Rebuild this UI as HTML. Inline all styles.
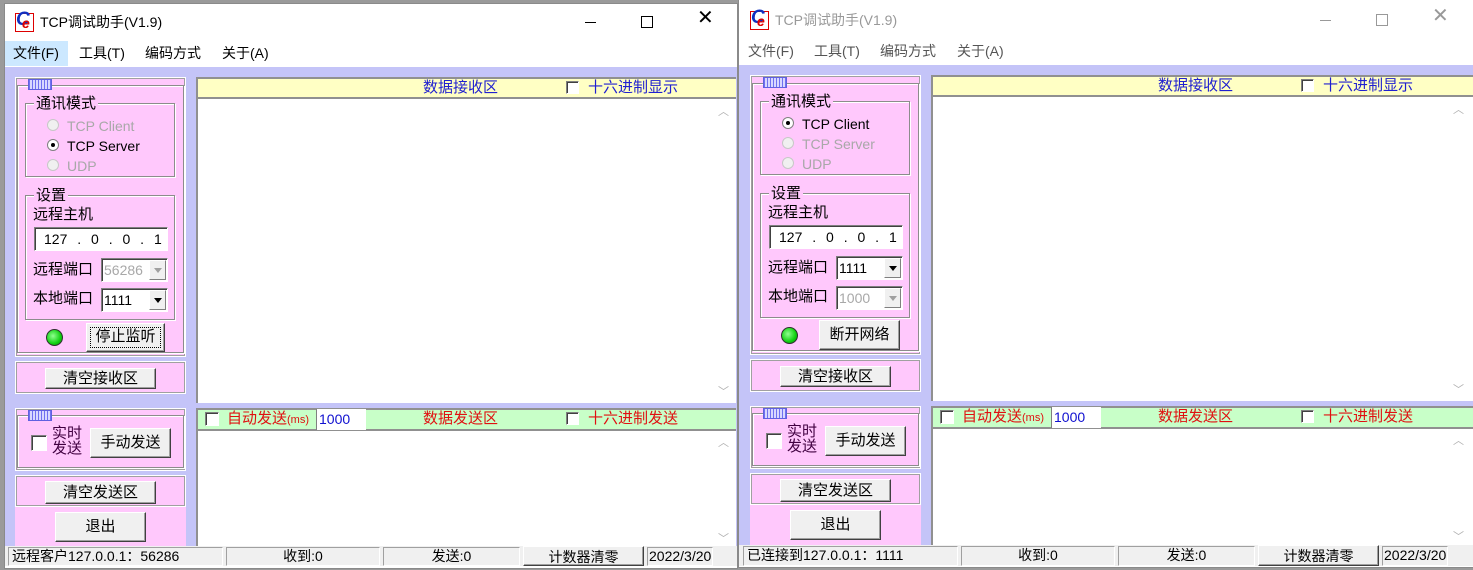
<!DOCTYPE html>
<html><head><meta charset="utf-8">
<style>
*{box-sizing:border-box;margin:0;padding:0}
body{width:1473px;height:566px;position:relative;overflow:hidden;background:#9a9a9a;font-family:"Liberation Sans","Noto Sans CJK SC",sans-serif;color:#000}
.win{position:absolute;left:0;top:0;width:740px;height:570px}
.a{position:absolute}
.t{position:absolute;white-space:nowrap;font-size:14px;line-height:16px}
.client{background:#c4c4f8}
.pink{background:#ffc8fc;border:1px solid #fff;box-shadow:inset 0 0 0 1px #a0a0a0}
.grp{border:1px solid #8c8c8c;box-shadow:1px 1px 0 #fff, inset 1px 1px 0 #fff}
.gl{position:absolute;background:#ffc8fc;padding:0 2px;font-size:15px;line-height:16px}
.btn{position:absolute;background:#f0f0f0;border:1px solid;border-color:#fff #404040 #404040 #fff;box-shadow:inset -1px -1px 0 #a0a0a0;text-align:center;font-size:15px}
.inp{position:absolute;background:#fff;border:1px solid;border-color:#808080 #fff #fff #808080;box-shadow:inset 1px 1px 0 #404040;font-size:14px;line-height:18px}
.cb{position:absolute;width:13px;height:13px;background:#fff;border:1px solid;border-color:#808080 #fff #fff #808080;box-shadow:inset 1px 1px 0 #404040}
.rad{position:absolute;width:12px;height:12px;border-radius:50%;background:#fff;border:1px solid #808080}
.rad.dis{background:#f0f0f0;border-color:#c8c8c8}
.rad.on::after{content:"";position:absolute;left:3px;top:3px;width:4px;height:4px;border-radius:50%;background:#000}
.dis{color:#a8a8a8}
.ic{position:absolute;width:24px;height:11px;background:repeating-linear-gradient(90deg,#7070f0 0 1px,#d8d8ff 1px 3px);border:1px solid #6060e0}
.ddb{position:absolute;right:1px;top:1px;bottom:1px;width:17px;background:#f0f0f0;border:1px solid;border-color:#fff #808080 #808080 #fff}
.ddb::after{content:"";position:absolute;left:4px;top:7px;border:4px solid transparent;border-top:5px solid #000}
.ddb.d::after{border-top-color:#a0a0a0}
.sb{position:absolute;background:#f0f0f0;border:1px solid;border-color:#a0a0a0 #fff #fff #a0a0a0;font-size:14px;line-height:17px}
.chev{position:absolute;color:#b0b0b0;font-size:11px}
</style></head><body>

<!-- LEFT WINDOW -->
<div class="win">
 <div class="a" style="left:4px;top:3px;width:734px;height:566px;background:#fff;border:1px solid #8a8a8a"></div>
 <div class="a" style="left:15px;top:13px;width:19px;height:19px;border:1px solid #d00;background:#fff"></div>
 <div class="t" style="left:16px;top:12px;font-size:19px;font-style:italic;font-weight:bold;color:#1030c0">C</div>
 <div class="t" style="left:22px;top:15px;font-size:14px;font-style:italic;font-weight:bold;color:#e00000">e</div>
 <div class="t" style="left:40px;top:14px;font-size:14px">TCP调试助手(V1.9)</div>
 <div class="a" style="left:585px;top:22px;width:11px;height:1px;background:#000"></div>
 <div class="a" style="left:641px;top:16px;width:12px;height:12px;border:1px solid #000"></div>
 <div class="t" style="left:697px;top:10px;font-size:20px;font-weight:300">✕</div>
 <div class="a" style="left:5px;top:41px;width:63px;height:25px;background:#cce8ff"></div>
 <div class="t" style="left:13px;top:45px">文件(F)</div>
 <div class="t" style="left:79px;top:45px">工具(T)</div>
 <div class="t" style="left:145px;top:45px">编码方式</div>
 <div class="t" style="left:222px;top:45px">关于(A)</div>
 <div class="a client" style="left:5px;top:67px;width:732px;height:480px"></div>

 <div class="a pink" style="left:15px;top:77px;width:171px;height:280px"></div>
 <div class="a grp" style="left:17px;top:85px;width:167px;height:268px"></div>
 <div class="ic" style="left:28px;top:79px"></div>
 <div class="a grp" style="left:25px;top:103px;width:150px;height:74px"></div>
 <div class="gl" style="left:34px;top:96px">通讯模式</div>
 <div class="rad dis" style="left:47px;top:119px"></div><div class="t dis" style="left:67px;top:118px">TCP Client</div>
 <div class="rad on" style="left:47px;top:139px"></div><div class="t" style="left:67px;top:138px">TCP Server</div>
 <div class="rad dis" style="left:47px;top:159px"></div><div class="t dis" style="left:67px;top:158px">UDP</div>
 <div class="a grp" style="left:25px;top:195px;width:150px;height:125px"></div>
 <div class="gl" style="left:34px;top:188px">设置</div>
 <div class="t" style="left:33px;top:207px;font-size:15px">远程主机</div>
 <div class="inp" style="left:34px;top:227px;width:134px;height:24px;padding:2px 0 0 9px;word-spacing:6px">127 . 0 . 0 . 1</div>
 <div class="t" style="left:33px;top:262px;font-size:15px">远程端口</div>
 <div class="inp dis" style="left:101px;top:258px;width:67px;height:24px;padding:2px 0 0 2px">56286<div class="ddb d"></div></div>
 <div class="t" style="left:33px;top:291px;font-size:15px">本地端口</div>
 <div class="inp" style="left:101px;top:288px;width:67px;height:24px;padding:2px 0 0 2px">1111<div class="ddb"></div></div>
 <div class="a" style="left:46px;top:329px;width:17px;height:17px;border-radius:50%;background:radial-gradient(circle at 40% 40%,#90ff90,#10d010 60%,#108010);border:1px solid #303030"></div>
 <div class="btn" style="left:86px;top:323px;width:79px;height:29px;line-height:25px;outline:1px dotted #000;outline-offset:-5px">停止监听</div>
 <div class="a pink" style="left:15px;top:361px;width:171px;height:33px"></div>
 <div class="btn" style="left:45px;top:368px;width:111px;height:21px;line-height:19px">清空接收区</div>

 <div class="a pink" style="left:15px;top:408px;width:171px;height:63px"></div>
 <div class="a grp" style="left:17px;top:415px;width:167px;height:53px"></div>
 <div class="ic" style="left:28px;top:410px"></div>
 <div class="cb" style="left:31px;top:435px;width:16px;height:16px"></div>
 <div class="t" style="left:52px;top:426px;font-size:15px;line-height:15px;color:#400040">实时<br>发送</div>
 <div class="btn" style="left:90px;top:428px;width:81px;height:30px;line-height:27px">手动发送</div>
 <div class="a pink" style="left:15px;top:475px;width:171px;height:32px"></div>
 <div class="btn" style="left:45px;top:481px;width:111px;height:23px;line-height:21px">清空发送区</div>
 <div class="a" style="left:15px;top:507px;width:171px;height:40px;background:#ffc8fc"></div>
 <div class="btn" style="left:55px;top:512px;width:91px;height:30px;line-height:28px">退出</div>

 <div class="a" style="left:196px;top:77px;width:540px;height:22px;background:#ffffc4;border-top:2px solid #909090;border-bottom:2px solid #909090;border-left:2px solid #909090"></div>
 <div class="t" style="left:423px;top:80px;color:#2020d0;font-size:15px">数据接收区</div>
 <div class="cb" style="left:566px;top:81px"></div>
 <div class="t" style="left:588px;top:80px;color:#2020d0;font-size:15px">十六进制显示</div>
 <div class="a" style="left:196px;top:99px;width:540px;height:304px;background:#fff;border-left:2px solid #909090"></div>
 <div class="chev" style="left:718px;top:103px">︿</div>
 <div class="chev" style="left:718px;top:383px">﹀</div>

 <div class="a" style="left:196px;top:408px;width:540px;height:23px;background:#c8ffc8;border-top:2px solid #909090;border-bottom:2px solid #909090;border-left:2px solid #909090"></div>
 <div class="cb" style="left:205px;top:412px;width:14px;height:14px"></div>
 <div class="t" style="left:227px;top:411px;color:#e01010;font-size:15px">自动发送<span style="font-size:11px">(ms)</span></div>
 <div class="a" style="left:316px;top:409px;width:50px;height:21px;background:#fff;color:#1010d0;font-size:14px;padding:2px 0 0 2px;border-left:1px solid #808080">1000</div>
 <div class="t" style="left:423px;top:411px;color:#e01010;font-size:15px">数据发送区</div>
 <div class="cb" style="left:566px;top:412px"></div>
 <div class="t" style="left:588px;top:411px;color:#e01010;font-size:15px">十六进制发送</div>
 <div class="a" style="left:196px;top:431px;width:540px;height:116px;background:#fff;border-left:2px solid #909090"></div>
 <div class="chev" style="left:718px;top:434px">︿</div>
 <div class="chev" style="left:718px;top:530px">﹀</div>

 <div class="a" style="left:5px;top:546px;width:732px;height:20px;background:#f0f0f0"></div>
 <div class="sb" style="left:8px;top:547px;width:215px;height:19px;padding-left:3px">远程客户127.0.0.1：56286</div>
 <div class="sb" style="left:226px;top:547px;width:154px;height:19px;text-align:center">收到:0</div>
 <div class="sb" style="left:383px;top:547px;width:137px;height:19px;text-align:center">发送:0</div>
 <div class="btn" style="left:523px;top:546px;width:121px;height:20px;line-height:20px;font-size:14px">计数器清零</div>
 <div class="sb" style="left:647px;top:547px;width:66px;height:19px;overflow:hidden;padding-left:1px">2022/3/20</div>
</div>

<!-- RIGHT WINDOW -->
<div class="win" style="left:735px;top:-2px">
 <div class="a" style="left:3px;top:0px;width:740px;height:570px;background:#fff;border:1px solid #8a8a8a"></div>
 <div class="a" style="left:15px;top:13px;width:19px;height:19px;border:1px solid #d00;background:#fff"></div>
 <div class="t" style="left:16px;top:12px;font-size:19px;font-style:italic;font-weight:bold;color:#1030c0">C</div>
 <div class="t" style="left:22px;top:15px;font-size:14px;font-style:italic;font-weight:bold;color:#e00000">e</div>
 <div class="t" style="left:40px;top:14px;font-size:14px;color:#999">TCP调试助手(V1.9)</div>
 <div class="a" style="left:585px;top:22px;width:11px;height:1px;background:#999"></div>
 <div class="a" style="left:641px;top:16px;width:12px;height:12px;border:1px solid #999"></div>
 <div class="t" style="left:697px;top:10px;font-size:20px;font-weight:300;color:#999">✕</div>
 <div class="t" style="left:13px;top:45px;color:#555">文件(F)</div>
 <div class="t" style="left:79px;top:45px;color:#555">工具(T)</div>
 <div class="t" style="left:145px;top:45px;color:#555">编码方式</div>
 <div class="t" style="left:222px;top:45px;color:#555">关于(A)</div>
 <div class="a client" style="left:4px;top:67px;width:740px;height:482px"></div>

 <div class="a pink" style="left:15px;top:77px;width:171px;height:280px"></div>
 <div class="a grp" style="left:17px;top:85px;width:167px;height:268px"></div>
 <div class="ic" style="left:28px;top:79px"></div>
 <div class="a grp" style="left:25px;top:103px;width:150px;height:74px"></div>
 <div class="gl" style="left:34px;top:96px">通讯模式</div>
 <div class="rad on" style="left:47px;top:119px"></div><div class="t" style="left:67px;top:118px">TCP Client</div>
 <div class="rad dis" style="left:47px;top:139px"></div><div class="t dis" style="left:67px;top:138px">TCP Server</div>
 <div class="rad dis" style="left:47px;top:159px"></div><div class="t dis" style="left:67px;top:158px">UDP</div>
 <div class="a grp" style="left:25px;top:195px;width:150px;height:125px"></div>
 <div class="gl" style="left:34px;top:188px">设置</div>
 <div class="t" style="left:33px;top:207px;font-size:15px">远程主机</div>
 <div class="inp" style="left:34px;top:227px;width:134px;height:24px;padding:2px 0 0 9px;word-spacing:6px">127 . 0 . 0 . 1</div>
 <div class="t" style="left:33px;top:262px;font-size:15px">远程端口</div>
 <div class="inp" style="left:101px;top:258px;width:67px;height:24px;padding:2px 0 0 2px">1111<div class="ddb"></div></div>
 <div class="t" style="left:33px;top:291px;font-size:15px">本地端口</div>
 <div class="inp dis" style="left:101px;top:288px;width:67px;height:24px;padding:2px 0 0 2px">1000<div class="ddb d"></div></div>
 <div class="a" style="left:46px;top:329px;width:17px;height:17px;border-radius:50%;background:radial-gradient(circle at 40% 40%,#90ff90,#10d010 60%,#108010);border:1px solid #303030"></div>
 <div class="btn" style="left:84px;top:322px;width:81px;height:30px;line-height:27px">断开网络</div>
 <div class="a pink" style="left:15px;top:361px;width:171px;height:33px"></div>
 <div class="btn" style="left:45px;top:368px;width:111px;height:21px;line-height:19px">清空接收区</div>

 <div class="a pink" style="left:15px;top:408px;width:171px;height:63px"></div>
 <div class="a grp" style="left:17px;top:415px;width:167px;height:53px"></div>
 <div class="ic" style="left:28px;top:410px"></div>
 <div class="cb" style="left:31px;top:435px;width:16px;height:16px"></div>
 <div class="t" style="left:52px;top:426px;font-size:15px;line-height:15px;color:#400040">实时<br>发送</div>
 <div class="btn" style="left:90px;top:428px;width:81px;height:30px;line-height:27px">手动发送</div>
 <div class="a pink" style="left:15px;top:475px;width:171px;height:32px"></div>
 <div class="btn" style="left:45px;top:481px;width:111px;height:23px;line-height:21px">清空发送区</div>
 <div class="a" style="left:15px;top:507px;width:171px;height:40px;background:#ffc8fc"></div>
 <div class="btn" style="left:55px;top:512px;width:91px;height:30px;line-height:28px">退出</div>

 <div class="a" style="left:196px;top:77px;width:545px;height:22px;background:#ffffc4;border-top:2px solid #909090;border-bottom:2px solid #909090;border-left:2px solid #909090"></div>
 <div class="t" style="left:423px;top:80px;color:#2020d0;font-size:15px">数据接收区</div>
 <div class="cb" style="left:566px;top:81px"></div>
 <div class="t" style="left:588px;top:80px;color:#2020d0;font-size:15px">十六进制显示</div>
 <div class="a" style="left:196px;top:99px;width:545px;height:304px;background:#fff;border-left:2px solid #909090"></div>
 <div class="chev" style="left:718px;top:103px">︿</div>
 <div class="chev" style="left:718px;top:383px">﹀</div>

 <div class="a" style="left:196px;top:408px;width:545px;height:23px;background:#c8ffc8;border-top:2px solid #909090;border-bottom:2px solid #909090;border-left:2px solid #909090"></div>
 <div class="cb" style="left:205px;top:412px;width:14px;height:14px"></div>
 <div class="t" style="left:227px;top:411px;color:#e01010;font-size:15px">自动发送<span style="font-size:11px">(ms)</span></div>
 <div class="a" style="left:316px;top:409px;width:50px;height:21px;background:#fff;color:#1010d0;font-size:14px;padding:2px 0 0 2px;border-left:1px solid #808080">1000</div>
 <div class="t" style="left:423px;top:411px;color:#e01010;font-size:15px">数据发送区</div>
 <div class="cb" style="left:566px;top:412px"></div>
 <div class="t" style="left:588px;top:411px;color:#e01010;font-size:15px">十六进制发送</div>
 <div class="a" style="left:196px;top:431px;width:545px;height:117px;background:#fff;border-left:2px solid #909090"></div>
 <div class="chev" style="left:718px;top:434px">︿</div>
 <div class="chev" style="left:718px;top:530px">﹀</div>

 <div class="a" style="left:4px;top:547px;width:740px;height:21px;background:#f0f0f0"></div>
 <div class="sb" style="left:8px;top:548px;width:215px;height:20px;padding-left:3px">已连接到127.0.0.1：1111</div>
 <div class="sb" style="left:226px;top:548px;width:154px;height:20px;text-align:center">收到:0</div>
 <div class="sb" style="left:383px;top:548px;width:137px;height:20px;text-align:center">发送:0</div>
 <div class="btn" style="left:523px;top:547px;width:121px;height:21px;line-height:21px;font-size:14px">计数器清零</div>
 <div class="sb" style="left:647px;top:548px;width:66px;height:20px;overflow:hidden;padding-left:1px">2022/3/20</div>
</div>
</body></html>
